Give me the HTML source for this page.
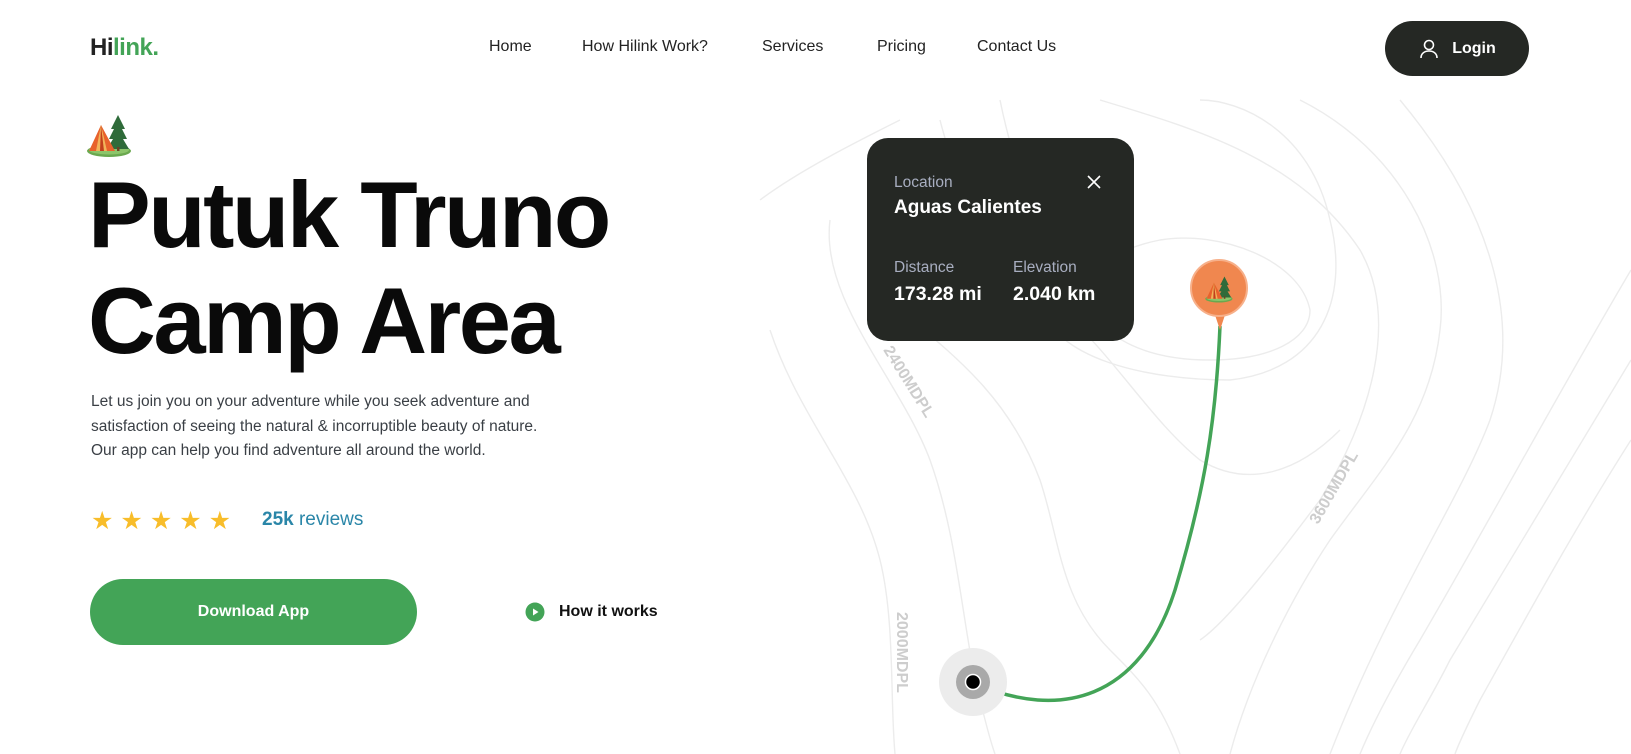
<!DOCTYPE html>
<html><head><meta charset="utf-8"><style>
*{margin:0;padding:0;box-sizing:border-box}
body{width:1631px;height:754px;overflow:hidden;background:#fff;font-family:"Liberation Sans",sans-serif;position:relative;color:#111}
.a{position:absolute;white-space:nowrap}
.nav{font-size:16px;color:#222;top:38px}
</style></head><body>
<svg width="0" height="0" style="position:absolute"><defs>
<g id="tent">
<ellipse cx="24" cy="40" rx="22" ry="6" fill="#6aa84f"/>
<ellipse cx="24" cy="39" rx="20" ry="4.5" fill="#8cc56a"/>
<path d="M33 4 L26 18 L29 18 L24 28 L28 28 L22 38 L44 38 L38 28 L42 28 L37 18 L40 18Z" fill="#2f6b3a"/>
<rect x="32" y="36" width="2.5" height="4" fill="#6b4226"/>
<path d="M16 14 L4 40 L30 40 Z" fill="#e8622c"/>
<path d="M16 14 L11 40 L22 40 Z" fill="#f2b45a"/>
<path d="M16 14 L15 40 L19 40 Z" fill="#c2401d"/>
</g></defs></svg>
<svg class="a" style="left:0;top:0" width="1631" height="754" viewBox="0 0 1631 754">
<g fill="none" stroke="#ececec" stroke-width="1.4">
<path d="M770,330 C800,420 860,480 880,560 C895,620 890,700 895,754"/>
<path d="M830,220 C820,300 900,380 930,460 C955,530 960,600 975,680 C985,720 990,740 995,754"/>
<path d="M900,310 C960,360 1010,400 1040,480 C1060,540 1060,600 1110,650 C1140,680 1160,700 1180,754"/>
<path d="M940,120 C960,200 1000,260 1060,310 C1110,350 1150,420 1200,460 C1250,490 1300,470 1340,430"/>
<path d="M1090,300 C1100,340 1150,360 1210,360 C1270,360 1310,340 1310,310 C1300,260 1220,230 1160,240 C1110,250 1090,270 1090,300Z"/>
<path d="M1000,100 C1020,200 1060,260 1040,300 C1050,360 1150,380 1230,380 C1320,370 1350,300 1330,220 C1310,130 1240,100 1200,100"/>
<path d="M1100,100 C1200,130 1300,160 1360,250 C1400,320 1370,420 1320,500 C1290,540 1230,620 1200,640"/>
<path d="M1300,100 C1400,150 1450,250 1440,330 C1430,420 1380,470 1330,540 C1290,600 1250,680 1230,754"/>
<path d="M1400,100 C1500,220 1520,330 1490,420 C1460,500 1390,600 1330,754"/>
<path d="M1631,270 C1560,390 1490,520 1420,640 C1390,690 1370,730 1360,754"/>
<path d="M1631,360 C1570,460 1510,560 1450,660 C1430,700 1410,730 1400,754"/>
<path d="M1631,440 C1580,520 1530,610 1480,700 C1470,720 1460,740 1455,754"/>
<path d="M760,200 C800,170 860,140 900,120"/>
</g>
<g font-family="Liberation Sans" font-weight="bold" font-size="16" fill="#cdcdcd">
<text transform="translate(883,350) rotate(58)">2400MDPL</text>
<text transform="translate(1318,525) rotate(-60)">3600MDPL</text>
<text transform="translate(897,612) rotate(90)">2000MDPL</text>
</g>
<path d="M976,684 C1060,720 1140,700 1175,590 C1205,490 1216,420 1220,326" fill="none" stroke="#43a457" stroke-width="3.5"/>
<circle cx="973" cy="682" r="34" fill="#ececec"/>
<circle cx="973" cy="682" r="17" fill="#a9a9a9"/>
<circle cx="973" cy="682" r="7.5" fill="#000" stroke="#fff" stroke-width="1.5"/>
<path d="M1214,312 L1220,330 L1226,312Z" fill="#f0874f"/>
<circle cx="1219" cy="288" r="28" fill="#f0874f" stroke="#f7b08a" stroke-width="2"/>
<use href="#tent" transform="translate(1204,274) scale(0.62)"/>
<use href="#tent" transform="translate(85,111)"/>
</svg>

<div class="a" style="left:90px;top:34px;font-size:24px;font-weight:bold;letter-spacing:-0.5px"><span style="color:#222">Hi</span><span style="color:#43a457">link.</span></div>
<div class="a nav" style="left:489px">Home</div>
<div class="a nav" style="left:582px">How Hilink Work?</div>
<div class="a nav" style="left:762px">Services</div>
<div class="a nav" style="left:877px">Pricing</div>
<div class="a nav" style="left:977px">Contact Us</div>
<div class="a" style="left:1385px;top:21px;width:144px;height:55px;border-radius:28px;background:#252824;color:#fff;font-weight:bold;font-size:16px;display:flex;align-items:center;justify-content:center;gap:12px">
<svg width="22" height="22" viewBox="0 0 22 22" fill="none" stroke="#fff" stroke-width="1.6"><circle cx="11" cy="7" r="4.5"/><path d="M3 20c0-4.5 3.5-7 8-7s8 2.5 8 7"/></svg>Login</div>

<div class="a" style="left:88px;top:162px;font-size:94px;font-weight:bold;line-height:106px;letter-spacing:-2.5px;color:#0a0a0a">Putuk Truno<br>Camp Area</div>
<div class="a" style="left:91px;top:390px;font-size:15.5px;line-height:24.5px;color:#3a3f45">Let us join you on your adventure while you seek adventure and<br>satisfaction of seeing the natural &amp; incorruptible beauty of nature.<br>Our app can help you find adventure all around the world.</div>
<div class="a" style="left:91px;top:506px;font-size:25px;color:#f8bd2a;letter-spacing:7px">★★★★★</div>
<div class="a" style="left:262px;top:509px;font-size:19px;color:#2a86a8"><b>25k</b> reviews</div>
<div class="a" style="left:90px;top:579px;width:327px;height:66px;border-radius:33px;background:#43a457;color:#fff;font-weight:bold;font-size:16px;display:flex;align-items:center;justify-content:center">Download App</div>
<svg class="a" style="left:525px;top:602px" width="20" height="20" viewBox="0 0 20 20"><circle cx="10" cy="10" r="9.5" fill="#43a457"/><path d="M8 6.5v7l5.5-3.5z" fill="#fff"/></svg>
<div class="a" style="left:559px;top:603px;font-size:16px;font-weight:bold;color:#111">How it works</div>

<div class="a" style="left:867px;top:138px;width:267px;height:203px;border-radius:21px;background:#252824;color:#fff">
<div class="a" style="left:27px;top:36px;font-size:15.5px;color:#a8aec0">Location</div>
<svg class="a" style="left:219px;top:36px" width="16" height="16" viewBox="0 0 16 16" stroke="#fff" stroke-width="1.6"><path d="M2 2L14 14M14 2L2 14"/></svg>
<div class="a" style="left:27px;top:59px;font-size:19px;font-weight:bold">Aguas Calientes</div>
<div class="a" style="left:27px;top:121px;font-size:15.5px;color:#a8aec0">Distance</div>
<div class="a" style="left:146px;top:121px;font-size:15.5px;color:#a8aec0">Elevation</div>
<div class="a" style="left:27px;top:145px;font-size:19.5px;font-weight:bold">173.28 mi</div>
<div class="a" style="left:146px;top:145px;font-size:19.5px;font-weight:bold">2.040 km</div>
</div>
</body></html>
